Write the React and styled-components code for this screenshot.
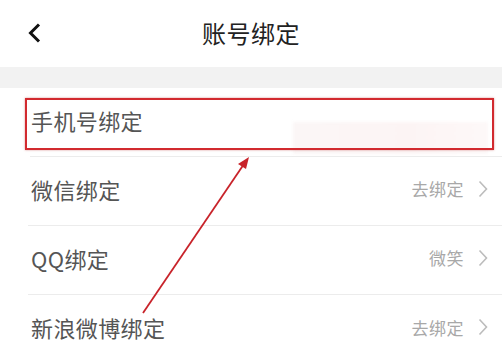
import React from 'react';
import styled, { createGlobalStyle } from 'styled-components';

const GlobalStyle = createGlobalStyle`
  html, body {
    margin: 0;
    padding: 0;
    background: #ffffff;
    font-family: "Noto Sans CJK SC", "Noto Sans", sans-serif;
  }
`;

const Page = styled.div`
  position: relative;
  width: 502px;
  height: 363px;
  overflow: hidden;
  background: #fff;
`;

const Header = styled.div`
  position: relative;
  height: 67px;
  display: flex;
  align-items: center;
  justify-content: center;
`;

const BackButton = styled.div`
  position: absolute;
  left: 27px;
  top: 22px;
  width: 16px;
  height: 22px;
  display: flex;
`;

const Title = styled.h1`
  margin: 0;
  font-size: 24px;
  font-weight: 400;
  color: #222;
  letter-spacing: 0.5px;
  transform: translateY(-1px);
`;

const Band = styled.div`
  height: 21px;
  background: #f2f2f2;
`;

const List = styled.div`
  display: flex;
  flex-direction: column;
`;

const Row = styled.div`
  position: relative;
  height: 69px;
  box-sizing: border-box;
  display: flex;
  align-items: center;
  justify-content: space-between;
  padding: 0 14px 5px 0;
  margin-left: ${props => (props.$first ? '30px' : '28px')};
  padding-left: ${props => (props.$first ? '1px' : '3px')};
  border-bottom: ${props => (props.$last ? 'none' : '1px solid #ececec')};
`;

const Label = styled.span`
  font-size: 22px;
  color: #555;
  letter-spacing: 0.4px;
`;

const Right = styled.div`
  display: flex;
  align-items: center;
  gap: 14px;
`;

const Value = styled.span`
  font-size: 17px;
  color: #a8a8a8;
  letter-spacing: 0.5px;
`;

const Highlight = styled.div`
  position: absolute;
  left: -5px;
  right: 8px;
  top: 10px;
  height: 52px;
  box-sizing: border-box;
  border: 2px solid #d22a2f;
  box-shadow: 0 0 2px rgba(180, 40, 40, 0.5);
  pointer-events: none;
`;

const Blur = styled.div`
  position: absolute;
  right: 14px;
  top: 34px;
  width: 195px;
  height: 32px;
  background: linear-gradient(90deg, #fbf6f6, #fcf4f4 60%, #fdf8f8);
  filter: blur(1.5px);
`;

const ArrowLayer = styled.svg`
  position: absolute;
  left: 0;
  top: 0;
  pointer-events: none;
`;

const Chevron = () => (
  <svg width="10" height="18" viewBox="0 0 10 18">
    <polyline points="1.5,1.5 8.5,9 1.5,16.5" fill="none" stroke="#bcbcbc" strokeWidth="1.6" />
  </svg>
);

const rows = [
  { label: '手机号绑定', value: null },
  { label: '微信绑定', value: '去绑定' },
  { label: 'QQ绑定', value: '微笑' },
  { label: '新浪微博绑定', value: '去绑定' },
];

export default function App() {
  return (
    <Page>
      <GlobalStyle />
      <Header>
        <BackButton>
          <svg width="16" height="22" viewBox="0 0 16 22">
            <polyline points="12,2.5 3.5,11 12,19.5" fill="none" stroke="#111" strokeWidth="3" />
          </svg>
        </BackButton>
        <Title>账号绑定</Title>
      </Header>
      <Band />
      <List>
        {rows.map((row, i) => (
          <Row key={row.label} $first={i === 0} $last={i === rows.length - 1}>
            <Label>{row.label}</Label>
            {row.value ? (
              <Right>
                <Value>{row.value}</Value>
                <Chevron />
              </Right>
            ) : (
              <>
                <Blur />
                <Highlight />
              </>
            )}
          </Row>
        ))}
      </List>
      <ArrowLayer width="502" height="363" viewBox="0 0 502 363">
        <line x1="143" y1="313" x2="244" y2="164" stroke="#c8232a" strokeWidth="1.8" />
        <polygon points="249,157 238,164 246,169" fill="#c8232a" />
      </ArrowLayer>
    </Page>
  );
}
